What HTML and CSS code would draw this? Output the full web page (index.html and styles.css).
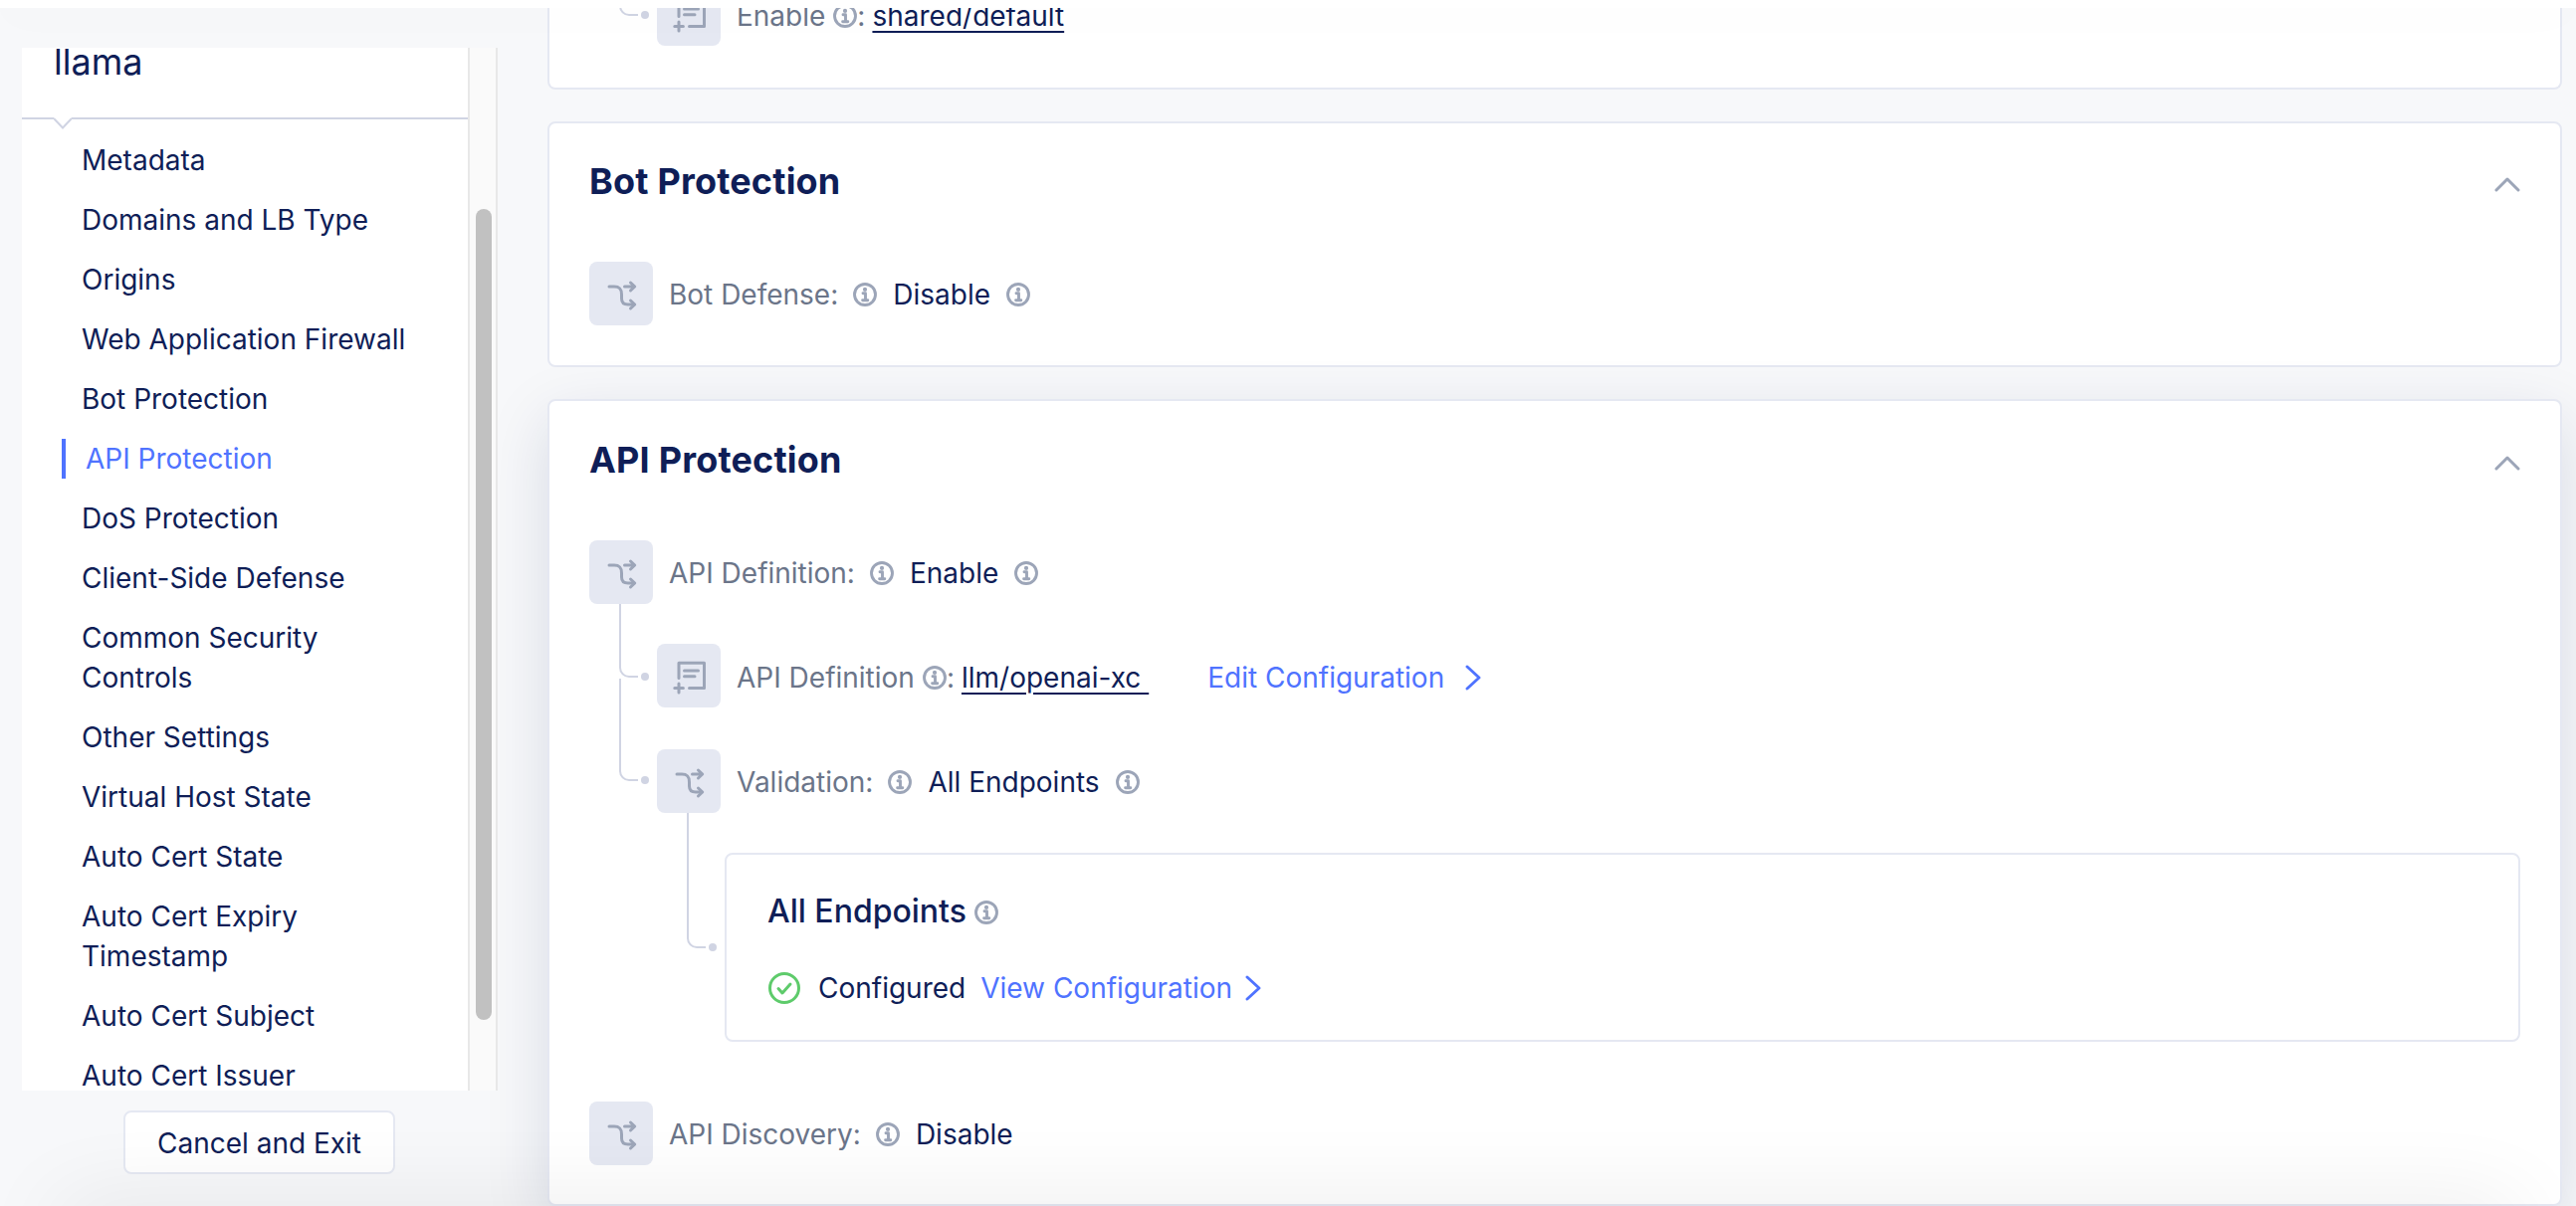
FILE: index.html
```html
<!DOCTYPE html>
<html lang="en">
<head>
<meta charset="utf-8">
<title>llama</title>
<link rel="stylesheet" href="styles.css">
</head>
<body>
<svg class="defs" width="0" height="0" aria-hidden="true">
  <symbol id="info" viewBox="0 0 24 24">
    <circle cx="12" cy="12" r="10.500" fill="none" stroke="currentColor" stroke-width="2.900"/>
    <circle cx="12" cy="6.900" r="2.100" fill="currentColor"/>
    <path d="M10 10.800h2.500v7M9.600 17.800h5.200" fill="none" stroke="currentColor" stroke-width="2.900" stroke-linecap="round" stroke-linejoin="round"/>
  </symbol>
  <symbol id="branch" viewBox="0 0 64 64">
    <path d="M20 25h5c5 0 7.500 2 7.500 8v4c0 4.500 2.500 6 6.500 6h6" fill="none" stroke="currentColor" stroke-width="3" stroke-linecap="round"/>
    <path d="M35.500 25h9.500M41.500 21l4.200 4-4.200 4M41.500 39l4.200 4-4.200 4" fill="none" stroke="currentColor" stroke-width="3" stroke-linecap="round" stroke-linejoin="round"/>
  </symbol>
  <symbol id="form" viewBox="0 0 64 64">
    <path d="M22 34.500V19.300h25.500V44.500H32.500M27.500 27h14M27.500 32.700h10.500M22 40v9M17.800 44.500h8.600" fill="none" stroke="currentColor" stroke-width="3" stroke-linecap="round" stroke-linejoin="round"/>
  </symbol>
  <symbol id="right" viewBox="0 0 16 26">
    <path d="M2 2l12 11L2 24" fill="none" stroke="currentColor" stroke-width="2.900" stroke-linecap="round" stroke-linejoin="round"/>
  </symbol>
  <symbol id="up" viewBox="0 0 26 16">
    <path d="M2 14L13 3l11 11" fill="none" stroke="currentColor" stroke-width="3" stroke-linecap="round" stroke-linejoin="round"/>
  </symbol>
  <symbol id="check" viewBox="0 0 32 32">
    <circle cx="16" cy="16" r="14.500" fill="none" stroke="currentColor" stroke-width="3"/>
    <path d="M10 16.500l4 4.500 8-9" fill="none" stroke="currentColor" stroke-width="3" stroke-linecap="round" stroke-linejoin="round"/>
  </symbol>
</svg>

<div class="topbar"></div>
<div class="page">
  <aside class="sidebar">
    <div class="scroller">
      <nav class="panel">
        <h1 class="name">llama</h1>
        <div class="divider"><svg class="notch" width="18" height="12" viewBox="0 0 18 12"><path d="M0 0h18v2L9 11 0 2z" fill="#fff"/><path d="M0 1l9 9.500L18 1" fill="none" stroke="#d0d4e3" stroke-width="2"/></svg></div>
        <ul class="menu">
          <li>Metadata</li>
          <li>Domains and LB Type</li>
          <li>Origins</li>
          <li>Web Application Firewall</li>
          <li>Bot Protection</li>
          <li class="active"><span>API Protection</span></li>
          <li>DoS Protection</li>
          <li>Client-Side Defense</li>
          <li>Common Security Controls</li>
          <li>Other Settings</li>
          <li>Virtual Host State</li>
          <li>Auto Cert State</li>
          <li>Auto Cert Expiry Timestamp</li>
          <li>Auto Cert Subject</li>
          <li>Auto Cert Issuer</li>
        </ul>
      </nav>
      <div class="track"><div class="thumb"></div></div>
    </div>
    <button class="cancel">Cancel and Exit</button>
  </aside>

  <main class="content">
    <section class="card card-waf">
      <div class="row nested form-row">
        <i class="link-line short"></i>
        <svg class="tile"><use href="#form"/></svg>
        <span class="label">Enable</span><svg class="info tight"><use href="#info"/></svg><span class="label">:</span>
        <a class="ref">shared/default</a>
      </div>
    </section>

    <section class="card card-bot">
      <header class="head"><h2>Bot Protection</h2><svg class="toggle"><use href="#up"/></svg></header>
      <div class="row">
        <svg class="tile"><use href="#branch"/></svg>
        <span class="label">Bot Defense:</span><svg class="info"><use href="#info"/></svg><span class="value">Disable</span><svg class="info"><use href="#info"/></svg>
      </div>
    </section>

    <section class="card card-api">
      <header class="head"><h2>API Protection</h2><svg class="toggle"><use href="#up"/></svg></header>
      <div class="row">
        <svg class="tile"><use href="#branch"/></svg>
        <span class="label">API Definition:</span><svg class="info"><use href="#info"/></svg><span class="value">Enable</span><svg class="info"><use href="#info"/></svg>
      </div>
      <div class="row nested form-row row-definition">
        <i class="link-line first"></i>
        <svg class="tile"><use href="#form"/></svg>
        <span class="label">API Definition</span><svg class="info tight"><use href="#info"/></svg><span class="label">:</span>
        <a class="ref">llm/openai-xc&nbsp;</a>
        <a class="action edit">Edit Configuration</a><svg class="chevron wide"><use href="#right"/></svg>
      </div>
      <div class="row nested row-validation">
        <i class="link-line second"></i>
        <svg class="tile"><use href="#branch"/></svg>
        <span class="label">Validation:</span><svg class="info"><use href="#info"/></svg><span class="value">All Endpoints</span><svg class="info"><use href="#info"/></svg>
      </div>
      <div class="subcard">
        <i class="link-line third"></i>
        <h3>All Endpoints<svg class="info"><use href="#info"/></svg></h3>
        <div class="status">
          <svg class="check"><use href="#check"/></svg>
          <span class="value">Configured</span>
          <a class="action">View Configuration</a><svg class="chevron"><use href="#right"/></svg>
        </div>
      </div>
      <div class="row">
        <svg class="tile"><use href="#branch"/></svg>
        <span class="label">API Discovery:</span><svg class="info"><use href="#info"/></svg><span class="value">Disable</span>
      </div>
    </section>
  </main>
</div>
<div class="bottom-shade"></div>
</body>
</html>
```

FILE: styles.css
```css
* { box-sizing: border-box; }

body {
  margin: 0;
  height: 1212px;
  overflow: hidden;
  position: relative;
  background: #f7f8fa;
  color: #0f1e57;
  font: 400 28px/40px Inter, "Liberation Sans", sans-serif;
}

h1, h2, h3, ul { margin: 0; padding: 0; }
svg { display: block; flex: none; }
.defs { position: absolute; }

.topbar {
  position: relative;
  z-index: 3;
  height: 8px;
  background: #fff;
  box-shadow: 0 0 48px rgba(0, 0, 0, .06);
}

.bottom-shade {
  position: absolute;
  z-index: 3;
  left: 60px;
  right: 60px;
  top: 1212px;
  height: 60px;
  box-shadow: 0 0 90px rgba(0, 0, 0, .09);
}

.page {
  display: flex;
  height: 1204px;
}

/* Sidebar */
.sidebar {
  position: relative;
  z-index: 2;
  display: flex;
  flex-direction: column;
  align-items: flex-start;
  width: 550px;
  padding: 40px 0 0 22px;
}
.scroller {
  position: relative;
  display: flex;
  width: 478px;
  height: 1048px;
  overflow: hidden;
}
.panel { width: 448px; background: #fff; }
.name {
  height: 70px;
  padding-left: 32px;
  font-size: 36px;
  font-weight: 400;
  line-height: 28px;
}
.divider { position: relative; height: 2px; background: #d0d4e3; }
.notch { position: absolute; left: 32px; top: 0; }
.menu { padding-top: 11px; list-style: none; }
.menu li { padding: 10px 60px; }
.menu .active { display: flex; padding-left: 40px; color: #4f73ff; }
.menu .active span { padding-left: 20px; border-left: 4px solid #4f73ff; }
.track {
  width: 30px;
  padding: 162px 0 0 6px;
  background: #fafafa;
  border: solid #e8e8e8;
  border-width: 0 2px;
}
.thumb { width: 16px; height: 815px; border-radius: 8px; background: #c1c1c1; }
.cancel {
  width: 273px;
  height: 64px;
  margin: 20px 0 0 102px;
  padding: 1px 0 0;
  border: 2px solid #e5e8f2;
  border-radius: 8px;
  background: #fff;
  color: inherit;
  font: inherit;
}

/* Cards */
.content {
  display: flex;
  flex-direction: column;
  gap: 32px;
  width: 2024px;
}
.card {
  flex: none;
  padding: 0 40px;
  border: 2px solid #e5e8f2;
  border-radius: 8px;
  background: #fff;
}
.card-waf { height: 82px; border-top: 0; border-radius: 0 0 8px 8px; }
.card-waf .row { margin-top: -26px; }
.card-bot { height: 247px; }
.card-api { height: 811px; box-shadow: 0 20px 64px rgba(15, 30, 87, .13); }

.head {
  display: flex;
  align-items: flex-start;
  justify-content: space-between;
  height: 139px;
  padding-top: 36px;
}
.card-api .head { height: 140px; padding-top: 37px; }
.head h2 { font-size: 36px; line-height: 44px; font-weight: 700; letter-spacing: .2px; }
.toggle { width: 26px; height: 16px; margin: 17px 0 0; color: #9ca5b8; }

/* Text sits slightly below the tile's centre line */
.row { display: flex; align-items: center; position: relative; height: 64px; padding-top: 2px; }
.row .tile { margin-top: -2px; }
.form-row { padding-top: 4px; }
.form-row .tile { margin-top: -4px; }
.nested { padding-left: 68px; }
.row-definition { margin-top: 40px; }
.row-validation { margin-top: 42px; }
.tile {
  width: 64px;
  height: 64px;
  margin-right: 16px;
  border-radius: 8px;
  background: #e5e8f2;
  color: #9ca5b8;
}
.label { color: #6b7589; }
.info { width: 24px; height: 24px; margin: 0 16px; color: #9ca5b8; overflow: visible; }
.label + .info { margin-left: 15px; }
.info.tight, .label + .info.tight { margin: 0 0 0 8px; }
.ref {
  margin-left: 7px;
  text-decoration: underline;
  text-decoration-thickness: 2px;
  text-underline-offset: 5px;
}
.action { color: #4f73ff; }
.edit { margin-left: 59px; }
.chevron { width: 16px; height: 26px; margin-left: 13px; color: #4f73ff; }
.chevron.wide { margin-left: 21px; }

/* Tree connectors */
.link-line {
  position: absolute;
  left: 30px;
  width: 19px;
  border: solid #d0d4e3;
  border-width: 0 0 2px 2px;
  border-bottom-left-radius: 10px;
}
.link-line::after {
  content: "";
  position: absolute;
  right: -11px;
  bottom: -5px;
  width: 8px;
  height: 8px;
  border-radius: 50%;
  background: #d0d4e3;
}
.short { top: -40px; height: 74px; }
.first { top: -40px; height: 74px; }
.second { top: -71px; height: 103px; }
.third { left: -40px; top: -42px; height: 136px; }

.subcard {
  position: relative;
  height: 190px;
  margin: 40px 0 60px 136px;
  padding: 35px 41px;
  border: 2px solid #e5e8f2;
  border-radius: 8px;
}
.subcard h3 { display: flex; align-items: center; font-size: 32px; line-height: 44px; font-weight: 500; }
.subcard h3 .info { margin: 1px 0 0 8px; }
.status { display: flex; align-items: center; height: 40px; margin-top: 35px; }
.check { width: 32px; height: 32px; margin: 0 18px 0 1px; color: #5ecb6b; }
.status .action { margin-left: 15px; }
```
